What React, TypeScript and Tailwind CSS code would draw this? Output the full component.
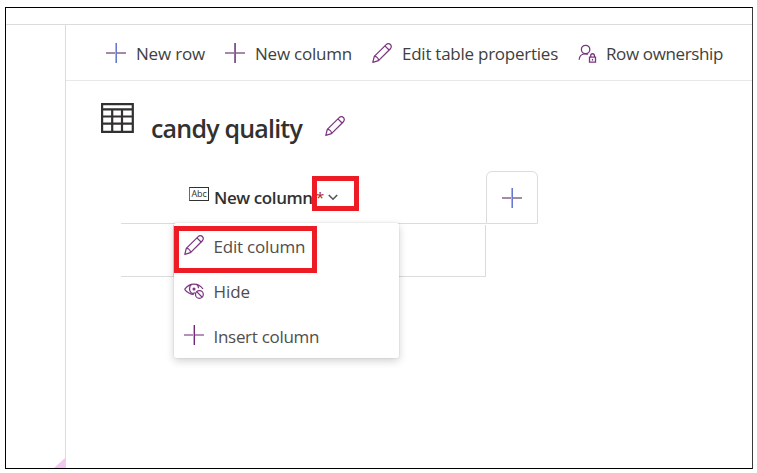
import type { ReactNode } from 'react';

function Plus({ v = '#742774', h = '#a489a9', w = '#c9a9c2' }: { v?: string; h?: string; w?: string }) {
  return (
    <svg width="20" height="20" viewBox="0 0 20 20" fill="none" shapeRendering="crispEdges" className="shrink-0">
      <path d="M0 10H20" stroke={h} strokeWidth="2" />
      <path d="M10.5 0V20" stroke={v} strokeWidth="1" />
      <path d="M9.5 0V20" stroke={w} strokeWidth="1" />
    </svg>
  );
}

function Pencil() {
  return (
    <svg width="20" height="20" viewBox="0 0 20 20" fill="none" stroke="#7b3480" strokeWidth="1.25" strokeLinejoin="round" className="shrink-0">
      <path d="M.8 19.3 2.3 13.4 14.2 1.6C15.4.4 17.2.3 18.4 1.5 19.6 2.7 19.6 4.5 18.4 5.7L6.5 17.6Z" />
      <path d="M2.3 13.4C4.6 13.4 6.5 15.2 6.5 17.6M12.9 2.9 17.1 7" />
    </svg>
  );
}

function PersonLock() {
  return (
    <svg width="19" height="20" viewBox="0 0 19 20" fill="none" stroke="#7b3480" strokeWidth="1.3" className="shrink-0">
      <circle cx="7.6" cy="6.5" r="4.2" />
      <path d="M1.2 16.8C1.2 13.3 3.7 10.8 7.4 10.8 8.4 10.8 9.1 11 9.9 11.4" />
      <path d="M11.5 14.2H17.5V19.2H11.5ZM12.7 14.2V12.7C12.7 10.1 16.4 10.1 16.4 12.7V14.2" />
      <path d="M14.5 15.9V17.6" />
    </svg>
  );
}

function EyeBlocked() {
  return (
    <svg width="20" height="20" viewBox="0 0 20 20" fill="none" stroke="#7b3480" strokeWidth="1.25" className="shrink-0">
      <g transform="translate(0 1.5)">
        <path d="M.6 7.8C3.5 4 6.5 2.6 10 2.6 13.5 2.6 16.5 4 19 7.5M.6 7.8C3.2 11 6 12.7 9.8 12.9" />
        <path d="M11 11.3C8 12.7 5.5 10.7 5.5 7.6 5.5 5.4 6.2 3.8 7.6 2.8M12.5 2.8C13.9 3.7 14.5 5 14.6 6.8" />
        <circle cx="10" cy="7.5" r=".9" fill="#7b3480" />
        <circle cx="15.4" cy="12.9" r="3.9" />
        <path d="M12.7 10.1 18.2 15.7" />
      </g>
    </svg>
  );
}

function TableIcon() {
  return (
    <svg width="33" height="30" viewBox="0 0 33 30" fill="none" stroke="#323130" strokeWidth="2.2" className="shrink-0">
      <path d="M1.1 1.1H31.8V28.8H1.1ZM1 6.3H32M1 13.5H32M1 20.7H32M11.2 6V29M21 6V29" />
    </svg>
  );
}

function Command({ icon, label, box, text }: { icon: ReactNode; label: string; box: string; text: string }) {
  return (
    <div className={`flex shrink-0 items-center gap-[10px] ${box}`}>
      {icon}
      <span className={`whitespace-nowrap pt-px ${text}`}>{label}</span>
    </div>
  );
}

function MenuItem({ icon, label, text }: { icon: ReactNode; label: string; text: string }) {
  return (
    <div className="flex h-[45px] items-center gap-[10px] pl-[10px]">
      <div className="mt-[-2px]">{icon}</div>
      <span className={`-ml-[0.5px] whitespace-nowrap pt-[3px] text-[#504e4c] ${text}`}>{label}</span>
    </div>
  );
}

export default function App() {
  return (
    <div className="h-[473px] w-[757px] overflow-hidden bg-white pt-[7px] pl-[5px] font-['Open_Sans','Noto_Sans',sans-serif] text-[17px] font-normal text-[#403f3e]">
      <div className="flex h-[462px] w-[748px] flex-col border border-black border-r-[#3b3b3b]">
        <div className="h-[17px] shrink-0 border-b border-[#dcdcdc]" />
        <div className="flex min-h-0 flex-1">
          <aside className="flex w-[60px] shrink-0 items-end justify-end border-r border-[#dcdcdc]">
            <svg width="11" height="10" viewBox="0 0 11 10">
              <path d="M0 10 11 0V10Z" fill="#f2c8f0" />
            </svg>
          </aside>
          <main className="min-w-0 flex-1">
            <div className="flex h-[56px] items-center border-b border-[#e8e8e8] pt-px pl-[40px]">
              <Command icon={<Plus v="#6678cf" />} label="New row" box="w-[119px]" text="tracking-[-0.2px]" />
              <Command icon={<Plus v="#b24a5e" w="#8f6f9c" />} label="New column" box="w-[147px]" text="tracking-[-0.22px]" />
              <Command icon={<Pencil />} label="Edit table properties" box="w-[206px]" text="tracking-[-0.25px]" />
              <Command icon={<PersonLock />} label="Row ownership" box="" text="-ml-px tracking-[-0.37px]" />
            </div>
            <div className="flex h-[90px] pt-[22px] pl-[35px]">
              <TableIcon />
              <h1 className="ml-[17px] w-[174px] pt-[7px] text-[25px] leading-[36px] font-semibold whitespace-nowrap tracking-[-0.8px] text-[#323130]">candy quality</h1>
              <div className="pt-[13px]"><Pencil /></div>
            </div>
            <div className="relative ml-[55px] w-[417px]">
              <div className="flex">
                <div className="flex h-[53px] w-[365px] items-center border-b border-[#dcdcdc] pl-[68px]">
                  <span className="mt-[-7px] flex h-[14px] w-[20px] shrink-0 items-center justify-center border border-[#323130] border-l-[#3775b5] text-[9px] leading-none tracking-[-0.1px] text-[#323130]">Abc</span>
                  <span className="ml-[5px] w-[102px] pt-px font-semibold whitespace-nowrap tracking-[-0.4px] text-[#323130]">New column</span>
                  <span className="w-[12px] text-[15px] text-[#a4262c]">*</span>
                  <svg width="10" height="7" viewBox="0 0 10 7" fill="none" stroke="#555" strokeWidth="1.6">
                    <path d="M.8 1 5 5.2 9.2 1" />
                  </svg>
                </div>
                <div className="flex h-[53px] w-[52px] items-center justify-center rounded-t-[6px] border border-[#dcdcdc]">
                  <Plus v="#6678cf" />
                </div>
              </div>
              <div className="flex h-[53px] w-[365px] pt-px">
                <div className="w-[53px] border-r border-b border-[#dcdcdc]" />
                <div className="flex-1 border-r border-b border-[#dcdcdc]" />
              </div>
              <div className="absolute top-[52px] left-[53px] w-[225px] rounded-[2px] bg-white shadow-[0_3px_8px_rgba(0,0,0,0.18),0_0_2px_rgba(0,0,0,0.14)]">
                <MenuItem icon={<Pencil />} label="Edit column" text="tracking-[-0.2px]" />
                <MenuItem icon={<EyeBlocked />} label="Hide" text="tracking-[-0.1px]" />
                <MenuItem icon={<Plus h="#b78fba" />} label="Insert column" text="tracking-[-0.3px]" />
              </div>
              <div className="absolute top-[5px] left-[191px] h-[35px] w-[47px] border-[5px] border-[#ed1c24]" />
              <div className="absolute top-[55px] left-[53px] h-[47px] w-[143px] border-[5px] border-[#ed1c24]" />
            </div>
          </main>
        </div>
      </div>
    </div>
  );
}
